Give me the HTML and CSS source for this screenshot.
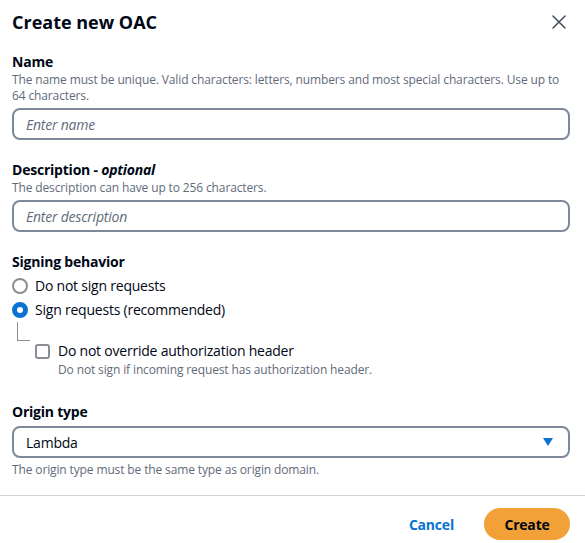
FILE: index.html
```html
<!DOCTYPE html>
<html>
<head>
<meta charset="utf-8">
<link rel="stylesheet" href="styles.css">
</head>
<body>
<div class="modal">
  <div class="header">
    <h1 class="title">Create new OAC</h1>
    <button class="close" aria-label="Close">
      <svg width="16" height="16" viewBox="0 0 16 16"><path d="M2 2 L14 14 M14 2 L2 14" stroke="#414d5c" stroke-width="1.5" fill="none" stroke-linecap="round"/></svg>
    </button>
  </div>
  <div class="body">
    <div class="field">
      <div class="label">Name</div>
      <div class="hint">The name must be unique. Valid characters: letters, numbers and most special characters. Use up to 64 characters.</div>
      <div class="input"><span class="placeholder">Enter name</span></div>
    </div>
    <div class="field">
      <div class="label">Description - <i>optional</i></div>
      <div class="hint">The description can have up to 256 characters.</div>
      <div class="input"><span class="placeholder">Enter description</span></div>
    </div>
    <div class="field signing">
      <div class="label">Signing behavior</div>
      <div class="radios">
        <div class="radio-row"><span class="radio"></span><span>Do not sign requests</span></div>
        <div class="radio-row"><span class="radio checked"></span><span>Sign requests (recommended)</span></div>
      </div>
      <div class="nested">
        <div class="connector"></div>
        <div class="check-wrap">
          <div class="check-row"><span class="checkbox"></span><span>Do not override authorization header</span></div>
          <div class="hint check-hint">Do not sign if incoming request has authorization header.</div>
        </div>
      </div>
    </div>
    <div class="field">
      <div class="label">Origin type</div>
      <div class="input select"><span class="value">Lambda</span>
        <svg class="caret" width="12" height="10" viewBox="0 0 12 10"><path d="M1 1 H11 L6 9 Z" fill="#0972d3"/></svg>
      </div>
      <div class="hint after">The origin type must be the same type as origin domain.</div>
    </div>
  </div>
  <div class="footer">
    <button class="link">Cancel</button>
    <button class="primary">Create</button>
  </div>
</div>
</body>
</html>
```
FILE: styles.css
```css
* { box-sizing: border-box; }
html, body { margin: 0; padding: 0; background: #fff; }
body {
  font-family: "Open Sans", "Noto Sans", sans-serif;
  color: #000716;
  font-size: 14px;
  letter-spacing: -0.22px;
}
.modal { width: 585px; height: 543px; }
.header {
  display: flex;
  justify-content: space-between;
  align-items: center;
  padding: 8px 18px 0 12px;
  height: 36px;
}
.title {
  margin: 0;
  font-size: 18px;
  line-height: 28px;
  font-weight: 700;
  letter-spacing: 0;
}
.close {
  background: none;
  border: 0;
  padding: 0;
  width: 16px;
  height: 16px;
  display: flex;
}
.body { padding: 16px 15px 0 12px; }
.field { margin-bottom: 20px; }
.field.signing { margin-bottom: 24px; }
.label {
  font-weight: 700;
  font-size: 14px;
  line-height: 20px;
}
.label i { font-weight: 700; }
.hint {
  font-size: 12px;
  line-height: 16px;
  color: #5f6b7a;
  letter-spacing: -0.13px;
}
.input {
  margin-top: 4px;
  height: 32px;
  border: 2px solid #7d8998;
  border-radius: 8px;
  display: flex;
  align-items: center;
  padding: 0 12px;
}
.placeholder {
  font-style: italic;
  color: #5f6b7a;
  font-size: 14px;
}
.select { justify-content: space-between; padding-right: 14px; }
.value { font-size: 14px; }
.caret { display: block; }
.hint.after { margin-top: 4px; }
.radios { margin-top: 2px; }
.radio-row {
  display: flex;
  align-items: center;
  gap: 7px;
  height: 24px;
  line-height: 20px;
}
.radio {
  width: 16px;
  height: 16px;
  border-radius: 50%;
  border: 2px solid #8c8c94;
  flex: none;
}
.radio.checked {
  border: 5px solid #0972d3;
}
.nested {
  display: flex;
  padding-left: 5px;
}
.connector {
  width: 13px;
  height: 19px;
  border-left: 1px solid #8c8c94;
  border-bottom: 1px solid #8c8c94;
  flex: none;
}
.check-wrap { padding-top: 19px; margin-left: 5px; }
.check-row {
  display: flex;
  align-items: center;
  gap: 8px;
  line-height: 20px;
}
.checkbox {
  width: 15px;
  height: 15px;
  border: 2px solid #8c8c94;
  border-radius: 3px;
  flex: none;
}
.check-hint { padding-left: 23px; margin-top: 1px; }
.footer {
  border-top: 1px solid #d1d5db;
  margin-top: -3px;
  display: flex;
  justify-content: flex-end;
  align-items: center;
  gap: 30px;
  padding: 12px 15px 0 12px;
}
.link {
  background: none;
  border: 0;
  font-family: inherit;
  font-weight: 700;
  font-size: 14px;
  letter-spacing: -0.2px;
  color: #0972d3;
  padding: 0;
}
.primary {
  font-family: inherit;
  background: #f2a038;
  border: 0;
  border-radius: 16px;
  width: 86px;
  height: 32px;
  font-weight: 700;
  font-size: 14px;
  letter-spacing: -0.2px;
  color: #000716;
}
```
